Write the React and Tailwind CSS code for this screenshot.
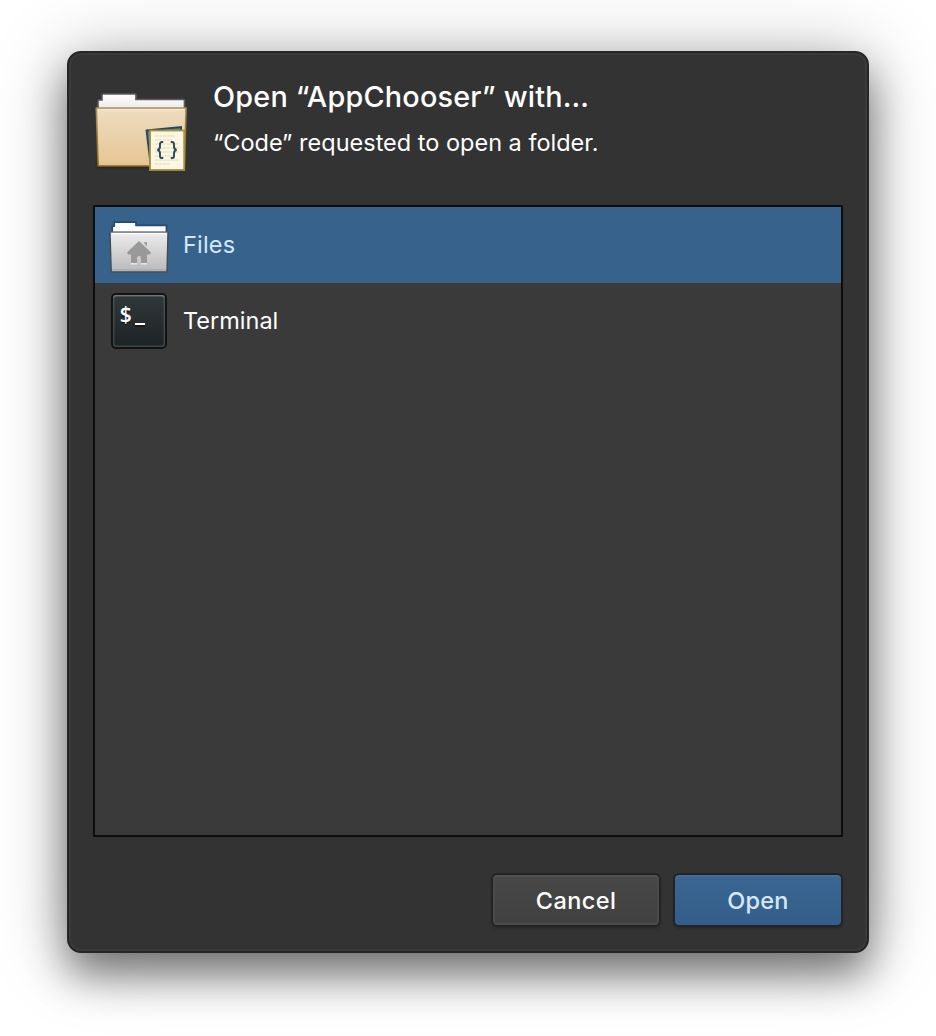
import React from "react";

function FolderCodeIcon() {
  return (
    <svg className="block h-24 w-24" viewBox="93 84 96 96">
      <defs>
        <linearGradient id="tan" x1="0" y1="0" x2="0" y2="1">
          <stop offset="0" stopColor="#edddc2" />
          <stop offset="1" stopColor="#e6c592" />
        </linearGradient>
        <linearGradient id="tanEdge" x1="0" y1="0" x2="0" y2="1">
          <stop offset="0" stopColor="#b08d58" />
          <stop offset="1" stopColor="#8a6a1c" />
        </linearGradient>
        <linearGradient id="paper" x1="0" y1="0" x2="0" y2="1">
          <stop offset="0" stopColor="#fff" />
          <stop offset="1" stopColor="#e9e9e9" />
        </linearGradient>
        <filter id="soft" x="-20%" y="-20%" width="140%" height="140%">
          <feGaussianBlur stdDeviation="1" />
        </filter>
      </defs>
      <rect x="97" y="160" width="88" height="8" rx="1" fill="#1d1d1d" opacity="0.7" filter="url(#soft)" />
      <path d="M98 110V101a1 1 0 0 1 1-1H102V95a1 1 0 0 1 1-1H135a1 1 0 0 1 1 1V99.500H183.500a1 1 0 0 1 1 1V110Z" fill="url(#paper)" stroke="#5c5960" strokeWidth="1.700" />
      <path d="M96.300 108H186L184.500 166H98.100Z" fill="url(#tan)" stroke="url(#tanEdge)" strokeWidth="1.600" strokeLinejoin="round" />
      <path d="M98 109.700H184" stroke="#f7ecd9" strokeWidth="1" />
      <path d="M146.500 130.500L181 127L183 165L151 168Z" fill="#5c7d88" stroke="#27485a" strokeWidth="1.800" />
      <rect x="150" y="130.500" width="34.200" height="39.500" fill="#fdf6e3" stroke="#a39142" strokeWidth="1.800" />
      <path d="M155 136H175M155 140H172M155 144H178M155 148H179M155 152H178M155 156H175M155 160H179M155 164H170" stroke="#eee8d1" strokeWidth="2" strokeDasharray="3.500 .5" />
      <path d="M163.200 142H162C159.700 142 159.900 144 160 146C160.100 148.500 159.500 149.800 157.300 150C159.500 150.200 160.100 151.500 160 154C159.900 156.500 159.700 158 162 158H163.200M170.800 142H172C174.300 142 174.100 144 174 146C173.900 148.500 174.500 149.800 176.700 150C174.500 150.200 173.900 151.500 174 154C174.100 156.500 174.300 158 172 158H170.800" fill="none" stroke="#244a5c" strokeWidth="1.900" />
    </svg>
  );
}

function HomeFolderIcon() {
  return (
    <svg className="block h-16 w-16" viewBox="107 213 64 64">
      <defs>
        <linearGradient id="silver" x1="0" y1="0" x2="0" y2="1">
          <stop offset="0" stopColor="#ededed" />
          <stop offset="1" stopColor="#b9b9b9" />
        </linearGradient>
      </defs>
      <path d="M112.200 234V226H114.200V222.200H136V225.300H166.500V234" fill="#fdfdfd" stroke="#234b74" strokeWidth="1.800" strokeLinejoin="round" />
      <path d="M110 232.300H168L167 271.900H111.200Z" fill="url(#silver)" stroke="#3f4b58" strokeWidth="1.400" strokeLinejoin="round" />
      <path d="M110.500 232.300H167.500" stroke="#8b8b8b" strokeWidth="1.200" />
      <path d="M112 233.600H166" stroke="#fff" strokeWidth="1.200" />
      <path d="M112 269.800H166" stroke="#aaa" strokeWidth="1.200" />
      <path d="M131 263.700h6M141 263.700h6" stroke="#e6e6e6" strokeWidth="1.500" />
      <path d="M139 241L151 252.500L150 254.500H147V263H141V258a2 2 0 0 0-4 0V263H131V254.500H128L127 252.500Z" fill="#999" />
      <path d="M143.500 242.300h3.500v4.500Z" fill="#999" />
    </svg>
  );
}

function TerminalIcon() {
  return (
    <svg className="block h-16 w-16" viewBox="107 289 64 64">
      <defs>
        <linearGradient id="term" x1="0" y1="0" x2="0" y2="1">
          <stop offset="0" stopColor="#31383b" />
          <stop offset="1" stopColor="#1d2324" />
        </linearGradient>
        <linearGradient id="termRim" x1="0" y1="0" x2="0" y2="1">
          <stop offset="0" stopColor="#737879" />
          <stop offset=".06" stopColor="#485052" />
          <stop offset="1" stopColor="#3a4345" />
        </linearGradient>
      </defs>
      <rect x="112" y="294" width="54" height="54" rx="4" fill="url(#term)" stroke="#111313" strokeWidth="2" />
      <rect x="113.700" y="295.700" width="50.600" height="50.600" rx="2.500" fill="none" stroke="url(#termRim)" strokeWidth="1.500" />
      <text x="119.700" y="323.500" fontSize="21" fontWeight="600" fontFamily="'Open Sans', sans-serif" fill="#111" opacity=".5">$</text>
      <text x="119.700" y="322" fontSize="21" fontWeight="600" fontFamily="'Open Sans', sans-serif" fill="#fff">$</text>
      <rect x="135" y="325" width="10" height="2" fill="#111" opacity=".6" />
      <rect x="135" y="323" width="10" height="2" fill="#fff" />
    </svg>
  );
}

export default function App() {
  return (
    <div className="h-[1036px] w-[936px] overflow-hidden bg-white pt-[51px] pl-[67px] font-['Inter',sans-serif] text-white">
      <div className="flex h-[902px] w-[802px] flex-col rounded-[14px] border-2 border-[#262626] bg-[#333333] px-6 pb-6 pt-[31px] shadow-[inset_0_0_0_2px_#3a3a3a,0_22px_40px_rgba(0,0,0,0.46),0_4px_76px_rgba(0,0,0,0.27)]">
        <header className="flex h-[121px] gap-6">
          <FolderCodeIcon />
          <div className="-mt-[5px] flex flex-col">
            <h1 className="text-[28.8px] font-medium leading-9 tracking-[0.2px]">Open “AppChooser” with…</h1>
            <p className="mt-[14px] text-[23.5px] leading-7">“Code” requested to open a folder.</p>
          </div>
        </header>
        <ul className="h-[632px] w-[750px] border-2 border-[#0e0e0e] bg-[#3a3a3a] text-[23.5px]">
          <li className="flex h-[76px] items-center gap-3 bg-[#36628c] pl-3 text-[#d5e8fb]">
            <HomeFolderIcon />
            <span className="tracking-[0.2px]">Files</span>
          </li>
          <li className="flex h-[76px] items-center gap-3 pl-3">
            <TerminalIcon />
            <span>Terminal</span>
          </li>
        </ul>
        <footer className="mt-9 flex justify-end gap-3 text-[23.5px] font-medium">
          <button className="h-[54px] w-[170px] rounded-md border-2 border-[#242424] bg-linear-to-b from-[#484848] to-[#404040] pt-0.5 tracking-[0.4px] shadow-[inset_0_2px_0_#505050,inset_0_0_0_2px_#4a4a4a,0_2px_2px_rgba(0,0,0,0.15)]">Cancel</button>
          <button className="h-[54px] w-[170px] rounded-md border-2 border-[#242424] bg-linear-to-b from-[#3b6693] to-[#325e89] pt-0.5 tracking-[0.2px] text-[#d5e8fb] shadow-[inset_0_2px_0_#436c98,0_2px_2px_rgba(0,0,0,0.15)]">Open</button>
        </footer>
      </div>
    </div>
  );
}
